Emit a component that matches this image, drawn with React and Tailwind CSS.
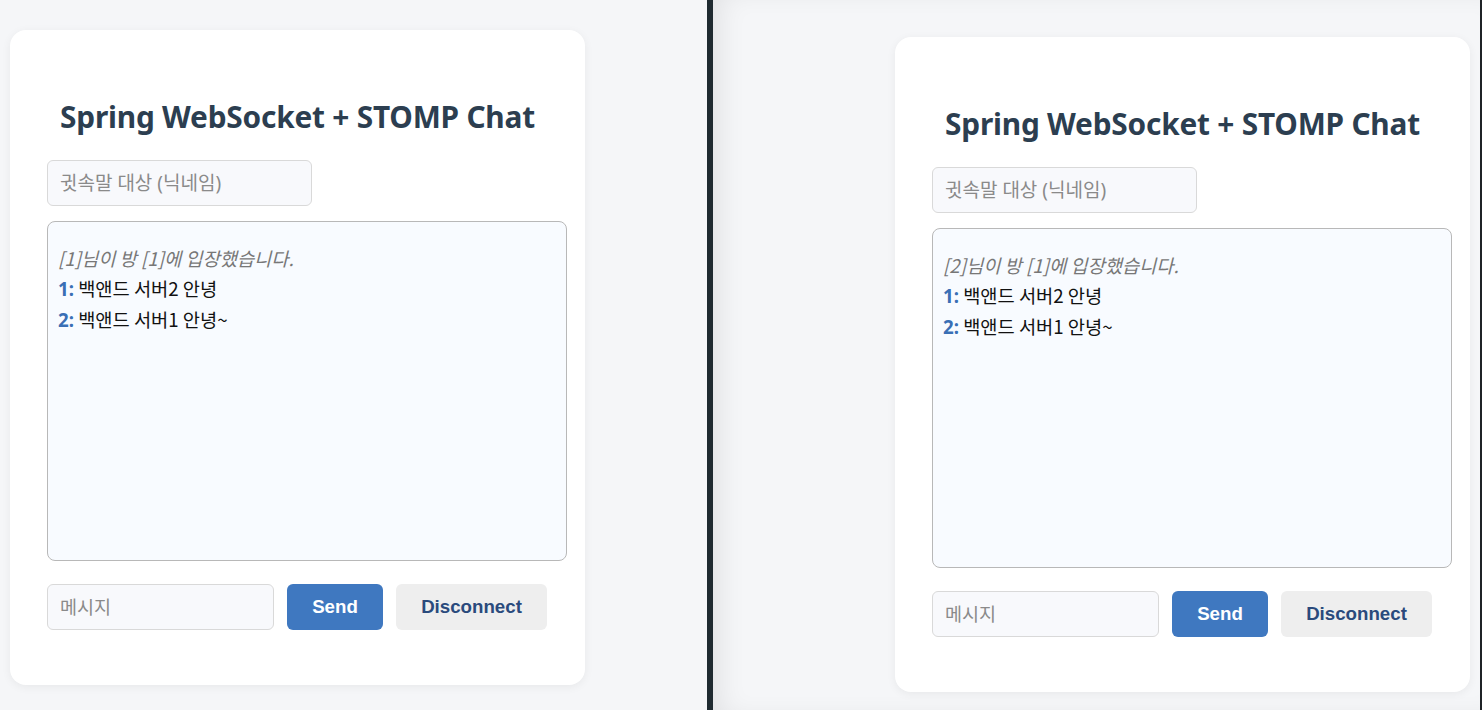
import React from "react";

const KR = { fontFamily: '"Noto Sans", "Noto Sans CJK KR", sans-serif' };

function ChatCard({ who }) {
  return (
    <div className="w-[575px] h-[655px] bg-white rounded-[16px] shadow-[0_2px_10px_rgba(0,0,0,0.06)] flex flex-col" style={KR}>
      <h2 className="mt-[69px] h-[36px] leading-[36px] text-center text-[29.8px] font-bold text-[#2c3e50] tracking-[-0.2px]">
        Spring WebSocket + STOMP Chat
      </h2>
      <div className="pl-[37px] flex flex-col">
        <div className="mt-[25px] w-[265px] h-[46px] rounded-[6px] border border-[#d9d9d9] bg-[#f8f9fc] flex items-center pl-[12px] text-[19px] text-[#8a8a8a]">
          귓속말 대상 (닉네임)
        </div>
        <div className="mt-[15px] w-[520px] h-[340px] rounded-[8px] border border-[#b8b8b8] bg-[#f8fbff] pt-[21px] pl-[10px] text-[18.7px] leading-[30px]" style={{ fontFamily: '"Noto Sans CJK KR", "Noto Sans", sans-serif' }}>
          <div className="italic text-[#777]">[{who}]님이 방 [1]에 입장했습니다.</div>
          <div className="text-[#111]"><span className="font-bold text-[#3a6fb5]" style={{ fontFamily: '"Noto Sans", sans-serif' }}>1:</span> 백앤드 서버2 안녕</div>
          <div className="text-[#111]"><span className="font-bold text-[#3a6fb5]" style={{ fontFamily: '"Noto Sans", sans-serif' }}>2:</span> 백앤드 서버1 안녕~</div>
        </div>
        <div className="mt-[23px] flex gap-[13px]">
          <div className="w-[227px] h-[46px] rounded-[6px] border border-[#d9d9d9] bg-[#f8f9fc] flex items-center pl-[12px] text-[18.5px] text-[#8a8a8a]">
            메시지
          </div>
          <div className="w-[96px] h-[46px] rounded-[6px] bg-[#3f78c0] flex items-center justify-center text-white font-bold text-[18.7px]" style={{ fontFamily: '"Liberation Sans", Arial, sans-serif' }}>
            Send
          </div>
          <div className="w-[151px] h-[46px] rounded-[6px] bg-[#eeeeee] flex items-center justify-center text-[#2a4a7c] font-bold text-[18.7px]" style={{ fontFamily: '"Liberation Sans", Arial, sans-serif' }}>
            Disconnect
          </div>
        </div>
      </div>
    </div>
  );
}

export default function App() {
  return (
    <div className="w-[1482px] h-[710px] flex overflow-hidden bg-[#f5f6f8]">
      <div className="w-[707px] h-full bg-[#f5f6f8] pl-[10px] pt-[30px]">
        <ChatCard who="1" />
      </div>
      <div className="w-[6px] h-full bg-[#1f2a30]" />
      <div className="flex-1 h-full bg-[#f5f6f8] shadow-[inset_16px_0_28px_-10px_rgba(0,0,0,0.09)] pl-[182px] pt-[37px]">
        <ChatCard who="2" />
      </div>
      <div className="w-[2px] h-full bg-[#1f2326]" />
    </div>
  );
}
